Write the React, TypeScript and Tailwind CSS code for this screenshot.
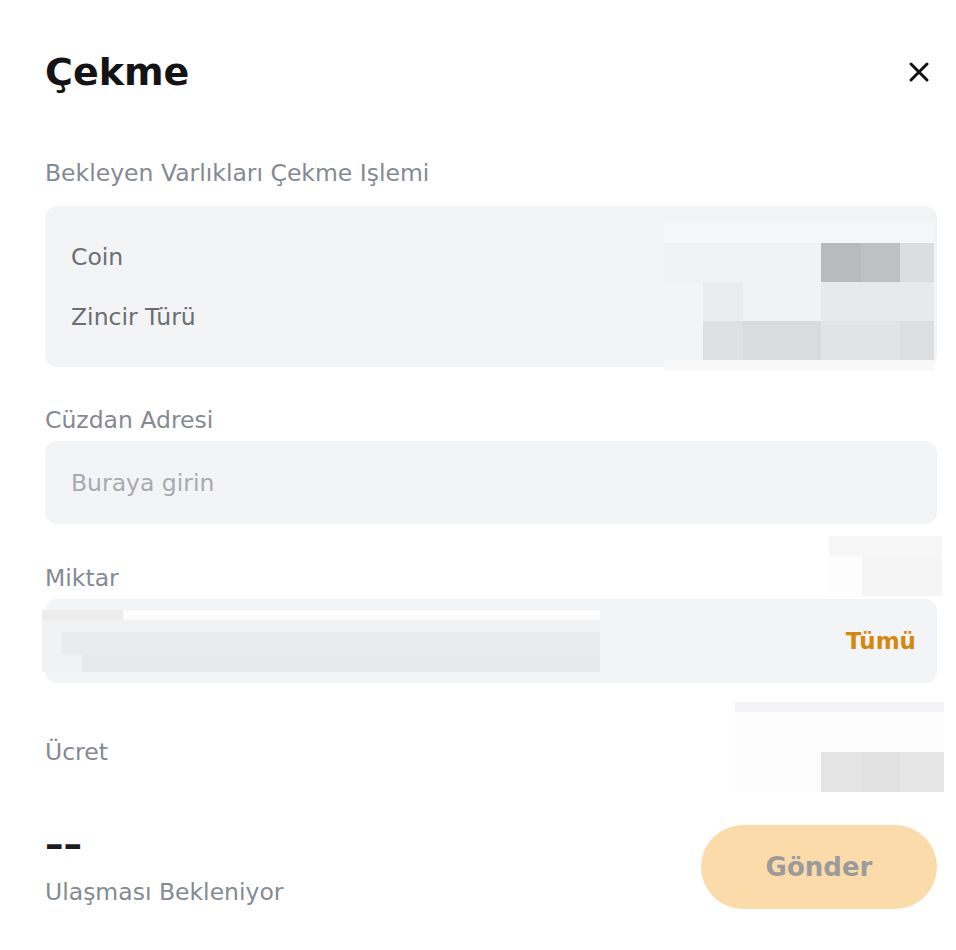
type Cell = { x: number; y: number; w: number; h: number; c: string };

// blurred (pixelated) patches laid over the form, page coords
const mosaics: Cell[] = [
  // coin / chain values
  { x: 664, y: 222, w: 270, h: 21, c: "#f5f6f7" },
  { x: 664, y: 243, w: 157, h: 39, c: "#f1f2f4" },
  { x: 821, y: 243, w: 40, h: 39, c: "#b9babc" },
  { x: 861, y: 243, w: 39, h: 39, c: "#bfc0c2" },
  { x: 900, y: 243, w: 34, h: 39, c: "#dcdddf" },
  { x: 664, y: 282, w: 39, h: 39, c: "#f3f4f6" },
  { x: 703, y: 282, w: 40, h: 39, c: "#ebecee" },
  { x: 743, y: 282, w: 78, h: 39, c: "#f1f2f4" },
  { x: 821, y: 282, w: 113, h: 39, c: "#e8e9eb" },
  { x: 664, y: 321, w: 39, h: 39, c: "#f3f4f6" },
  { x: 703, y: 321, w: 40, h: 39, c: "#dfe0e2" },
  { x: 743, y: 321, w: 78, h: 39, c: "#dadbdd" },
  { x: 821, y: 321, w: 79, h: 39, c: "#e2e3e5" },
  { x: 900, y: 321, w: 34, h: 39, c: "#dddee0" },
  { x: 664, y: 360, w: 270, h: 10, c: "#f8f8f9" },
  // above amount
  { x: 829, y: 536, w: 113, h: 20, c: "#f6f6f7" },
  { x: 829, y: 556, w: 33, h: 40, c: "#fdfdfd" },
  { x: 862, y: 556, w: 80, h: 40, c: "#f5f5f6" },
  // amount value
  { x: 42, y: 610, w: 81, h: 10, c: "#ececed" },
  { x: 123, y: 610, w: 477, h: 10, c: "#fdfdfd" },
  { x: 42, y: 620, w: 558, h: 52, c: "#f1f2f4" },
  { x: 62, y: 632, w: 538, h: 23, c: "#eaebed" },
  { x: 82, y: 655, w: 518, h: 17, c: "#e8e9eb" },
  // fee value
  { x: 735, y: 702, w: 209, h: 10, c: "#f3f3f5" },
  { x: 735, y: 712, w: 209, h: 80, c: "#fcfcfc" },
  { x: 821, y: 752, w: 40, h: 40, c: "#e4e4e5" },
  { x: 861, y: 752, w: 39, h: 40, c: "#e1e1e2" },
  { x: 900, y: 752, w: 44, h: 40, c: "#e6e6e7" },
];

const App = () => {
  return (
    <div
      className="relative w-[956px] h-[950px] bg-white pl-[45px] pr-[19px] text-[23.5px] leading-[30px] text-[#858a92]"
      style={{ fontFamily: '"DejaVu Sans", "Liberation Sans", sans-serif' }}
    >
      <div className="flex items-center justify-between pt-[48px]">
        <h1 className="text-[38px] leading-[48px] font-bold text-[#141414]">Çekme</h1>
        <svg width="22" height="22" viewBox="0 0 22 22" className="mr-[7px]">
          <path d="M3 3 L19 19 M19 3 L3 19" stroke="#111" strokeWidth="3" strokeLinecap="round" />
        </svg>
      </div>

      <p className="mt-[62px]">Bekleyen Varlıkları Çekme Işlemi</p>

      <div className="mt-[18px] h-[161px] rounded-xl bg-[#f3f4f6] pl-[26px] pt-[36px] flex flex-col gap-[30px] text-[#6b6e73]">
        <span>Coin</span>
        <span>Zincir Türü</span>
      </div>

      <p className="mt-[38px]">Cüzdan Adresi</p>
      <div className="mt-[6px] h-[83px] rounded-xl bg-[#f3f4f6] pl-[26px] flex items-center text-[#a7abb1]">
        Buraya girin
      </div>

      <p className="mt-[39px]">Miktar</p>
      <div className="mt-[6px] h-[84px] rounded-xl bg-[#f3f4f6] pr-[21px] flex items-center justify-end">
        <span className="text-[23px] font-bold text-[#d4880f]">Tümü</span>
      </div>

      <p className="mt-[54px]">Ücret</p>

      <div className="mt-[58px] flex items-start justify-between">
        <div className="flex flex-col">
          <span className="mt-[5px] text-[37px] font-bold text-[#1c1c1c] leading-[30px]">––</span>
          <span className="mt-[17px]">Ulaşması Bekleniyor</span>
        </div>
        <button className="w-[236px] h-[84px] rounded-full bg-[#fbdba9] text-[26px] font-bold text-[#9b9b9b]">
          Gönder
        </button>
      </div>

      {mosaics.map((m, i) => (
        <div
          key={i}
          className="absolute"
          style={{ left: m.x, top: m.y, width: m.w, height: m.h, background: m.c }}
        />
      ))}
    </div>
  );
};

export default App;
